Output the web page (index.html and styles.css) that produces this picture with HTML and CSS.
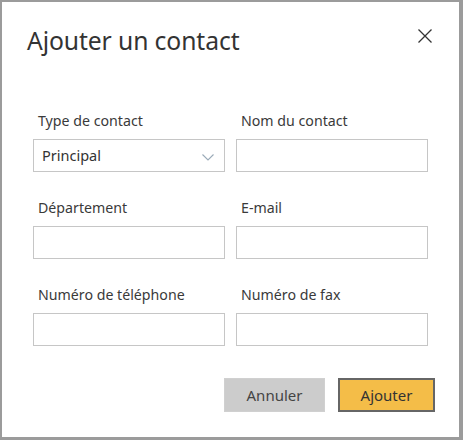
FILE: index.html
```html
<!DOCTYPE html>
<html lang="fr">
<head>
<meta charset="utf-8">
<title>Ajouter un contact</title>
<link rel="stylesheet" href="styles.css">
</head>
<body>
<div class="dialog">
  <div class="header">
    <h1 class="title">Ajouter un contact</h1>
    <button class="close" aria-label="Fermer">
      <svg width="14" height="14" viewBox="0 0 14 14"><path d="M0.5 0.5 L13.5 13.5 M13.5 0.5 L0.5 13.5" stroke="#333" stroke-width="1.3" fill="none"/></svg>
    </button>
  </div>
  <div class="form">
    <div class="field">
      <label class="label">Type de contact</label>
      <div class="box select">
        <span class="value">Principal</span>
        <svg class="chev" width="12" height="7" viewBox="0 0 12 7"><path d="M0.5 0.5 L6 6 L11.5 0.5" stroke="#9aaab8" stroke-width="1.1" fill="none"/></svg>
      </div>
    </div>
    <div class="field">
      <label class="label">Nom du contact</label>
      <div class="box"></div>
    </div>
    <div class="field">
      <label class="label">Département</label>
      <div class="box"></div>
    </div>
    <div class="field">
      <label class="label">E-mail</label>
      <div class="box"></div>
    </div>
    <div class="field">
      <label class="label">Numéro de téléphone</label>
      <div class="box"></div>
    </div>
    <div class="field">
      <label class="label">Numéro de fax</label>
      <div class="box"></div>
    </div>
  </div>
  <div class="actions">
    <button class="btn cancel">Annuler</button>
    <button class="btn primary">Ajouter</button>
  </div>
</div>
</body>
</html>
```
FILE: styles.css
```css
html, body {
  margin: 0;
  padding: 0;
}
body {
  background: #9b9b9b;
  width: 463px;
  height: 440px;
  overflow: hidden;
  font-family: "Noto Sans", "Open Sans", sans-serif;
  color: #333;
}
.dialog {
  margin: 2px 4px 3px 2px;
  width: 457px;
  height: 435px;
  background: #fff;
  display: flex;
  flex-direction: column;
  box-sizing: border-box;
}
.header {
  display: flex;
  justify-content: space-between;
  align-items: flex-start;
  padding: 22px 27px 0 25px;
  height: 109px;
  box-sizing: border-box;
}
.title {
  margin: 0;
  font-weight: 400;
  font-size: 24.7px;
  line-height: 34px;
  color: #333;
  letter-spacing: -0.1px;
}
.close {
  border: 0;
  background: none;
  padding: 0;
  margin-top: 5px;
  width: 14px;
  height: 14px;
  display: flex;
}
.form {
  display: grid;
  grid-template-columns: 192px 192px;
  column-gap: 11px;
  row-gap: 26px;
  padding: 0 0 0 31px;
}
.field {
  display: flex;
  flex-direction: column;
}
.label {
  font-size: 14.2px;
  line-height: 20px;
  padding-left: 5px;
  margin-bottom: 8px;
  color: #3a3a3a;
}
.box {
  height: 33px;
  border: 1px solid #c6c6c6;
  box-sizing: border-box;
  background: #fff;
}
.select {
  display: flex;
  align-items: center;
  justify-content: space-between;
  padding: 0 10px 0 8px;
}
.value {
  font-size: 14.5px;
  color: #333;
  padding-bottom: 2px;
}
.chev {
  margin-top: 4px;
}
.actions {
  display: flex;
  justify-content: flex-end;
  gap: 13px;
  padding: 32px 24px 0 0;
}
.btn {
  height: 34px;
  font-family: "Noto Sans", "Open Sans", sans-serif;
  font-size: 15px;
  color: #333;
  box-sizing: border-box;
  padding: 0;
}
.cancel {
  width: 101px;
  background: #cccccc;
  border: 1px solid #d0d0d0;
  color: #444;
}
.primary {
  width: 97px;
  background: #f4bd48;
  border: 2px solid #666;
}
```
